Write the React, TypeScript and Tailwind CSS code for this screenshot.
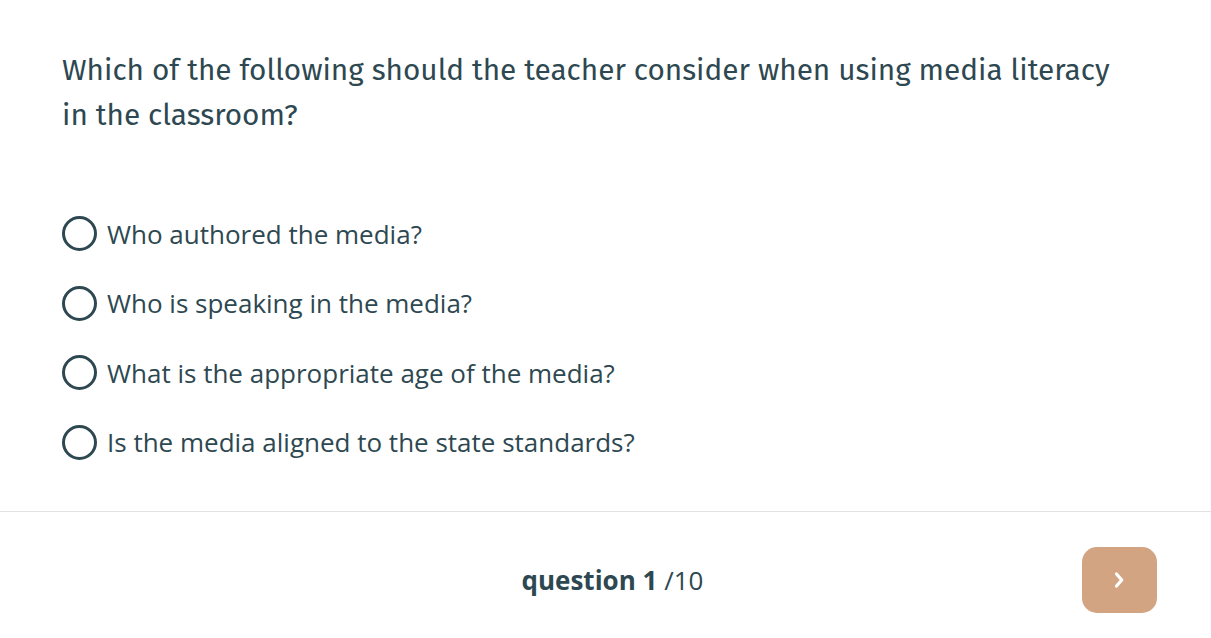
import React from "react";

const options = [
  "Who authored the media?",
  "Who is speaking in the media?",
  "What is the appropriate age of the media?",
  "Is the media aligned to the state standards?",
];

export default function App() {
  return (
    <div className="w-[1211px] h-[638px] bg-white flex flex-col text-[#2e4851] overflow-hidden">
      <div className="pl-[62px] pr-[60px] pt-[48px] h-[511px]">
        <h1
          className="text-[29.75px] leading-[45px] font-normal max-w-[1080px]"
          style={{ fontFamily: '"Fira Sans", Lato, "Noto Sans", sans-serif' }}
        >
          Which of the following should the teacher consider when using media literacy in the classroom?
        </h1>
        <div className="mt-[61px] flex flex-col">
          {options.map((o) => (
            <label key={o} className="h-[69.5px] flex items-center gap-[10px] cursor-pointer">
              <span className="w-[35px] h-[35px] rounded-full border-[3px] border-[#2e4851] shrink-0" />
              <span
                className="text-[26px] leading-[34px]"
                style={{ fontFamily: '"Open Sans", sans-serif' }}
              >
                {o}
              </span>
            </label>
          ))}
        </div>
      </div>
      <div className="border-t border-[#e2e2e2] flex-1 grid grid-cols-3 items-start pt-[35px]">
        <div />
        <div
          className="h-[66px] flex items-center justify-center pl-[14px] text-[26px] whitespace-nowrap"
          style={{ fontFamily: '"Open Sans", sans-serif' }}
        >
          <span className="font-bold">question 1</span>
          <span>&nbsp;/10</span>
        </div>
        <div className="flex justify-end pr-[54px]">
          <button className="w-[75px] h-[66px] rounded-[15px] bg-[#d3a481] flex items-center justify-center">
            <svg width="12" height="18" viewBox="0 0 12 18" fill="none">
              <path d="M3.5 3 L8.8 9 L3.5 15" stroke="white" strokeWidth="3.2" strokeLinecap="round" strokeLinejoin="round" />
            </svg>
          </button>
        </div>
      </div>
    </div>
  );
}
